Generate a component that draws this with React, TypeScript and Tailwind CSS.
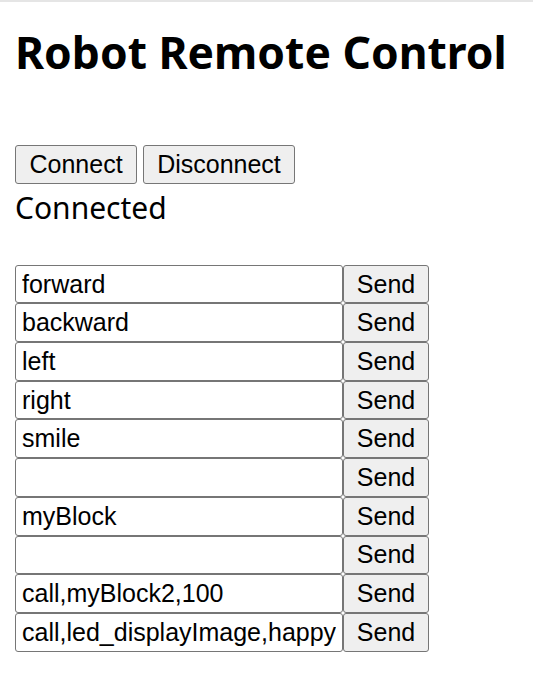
import React from "react";

const commands = [
  "forward",
  "backward",
  "left",
  "right",
  "smile",
  "",
  "myBlock",
  "",
  "call,myBlock2,100",
  "call,led_displayImage,happy",
];

const btn =
  "h-[38.7px] bg-[#efefef] border border-[#767676] rounded-[3px] text-[25px] text-black leading-none";

export default function App() {
  return (
    <div className="min-h-[673px] bg-white border-t-2 border-[#e5e5e5] px-[15px] font-['Noto_Sans',sans-serif] text-black">
      <h1 className="mt-[20px] text-[44.4px] font-bold leading-[60px] whitespace-nowrap">
        Robot Remote Control
      </h1>
      <div className="mt-[63px] flex gap-[5.5px] font-['Liberation_Sans',Arial,sans-serif]">
        <button className={`${btn} px-[13.5px]`}>Connect</button>
        <button className={`${btn} px-[13.5px]`}>Disconnect</button>
      </div>
      <div className="mt-[3px] text-[30px] leading-[41px]">Connected</div>
      <div className="mt-[37px] flex flex-col font-['Liberation_Sans',Arial,sans-serif]">
        {commands.map((c, i) => (
          <div key={i} className="flex">
            <input
              defaultValue={c}
              className="w-[328px] h-[38.7px] px-[6px] border border-[#767676] rounded-[3px] text-[25px] text-black bg-white outline-none"
            />
            <button className={`${btn} w-[86px]`}>Send</button>
          </div>
        ))}
      </div>
    </div>
  );
}
